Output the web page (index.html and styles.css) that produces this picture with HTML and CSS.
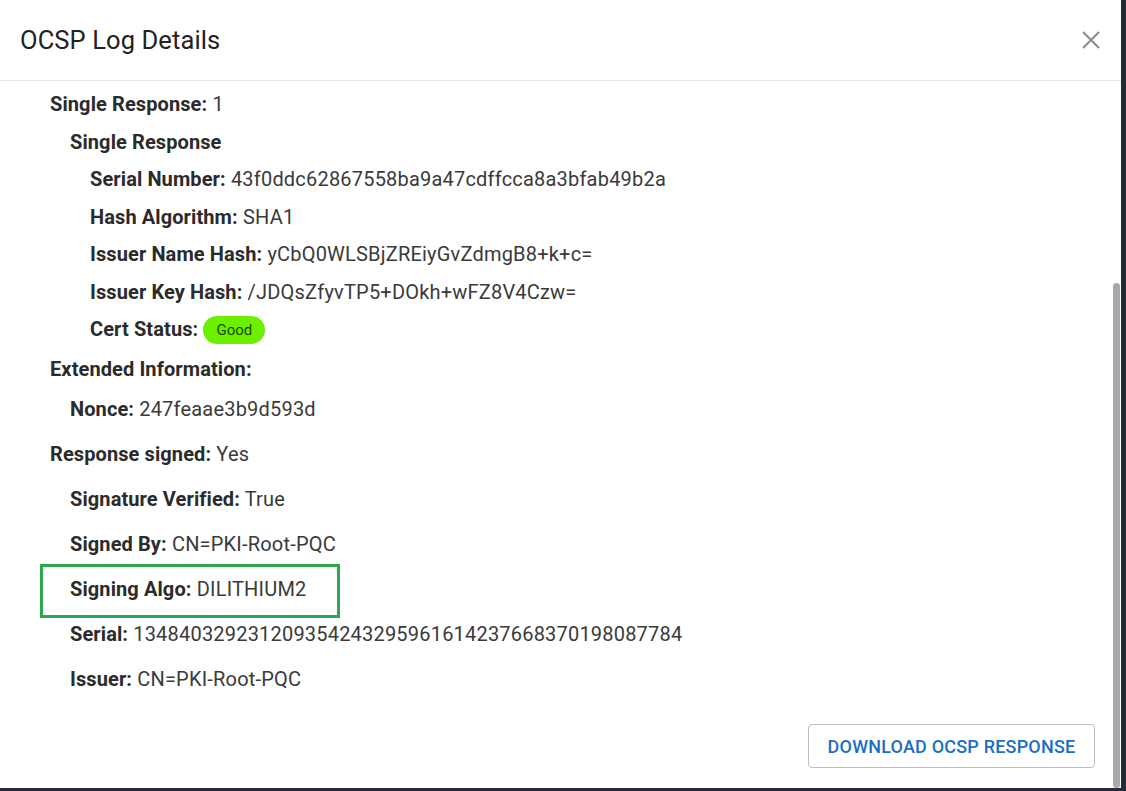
FILE: index.html
```html
<!DOCTYPE html>
<html lang="en">
<head>
    <meta charset="UTF-8">
    <meta name="viewport" content="width=device-width, initial-scale=1.0">
    <title>OCSP Log Details</title>
    <link rel="stylesheet" href="styles.css">
</head>
<body>
    <div class="dialog">
        <div class="dialog-header">
            <h2>OCSP Log Details</h2>
            <button class="close-btn" aria-label="Close">
                <svg width="20" height="20" viewBox="0 0 20 20">
                    <path d="M2 2 L18 18 M18 2 L2 18" stroke="#8a8a8a" stroke-width="2" fill="none"/>
                </svg>
            </button>
        </div>

        <div class="dialog-body">
            <div class="field lvl0"><b>Single Response:</b> 1</div>
            <div class="field lvl1"><b>Single Response</b></div>
            <div class="field lvl2"><b>Serial Number:</b> 43f0ddc62867558ba9a47cdffcca8a3bfab49b2a</div>
            <div class="field lvl2"><b>Hash Algorithm:</b> SHA1</div>
            <div class="field lvl2"><b>Issuer Name Hash:</b> yCbQ0WLSBjZREiyGvZdmgB8+k+c=</div>
            <div class="field lvl2"><b>Issuer Key Hash:</b> /JDQsZfyvTP5+DOkh+wFZ8V4Czw=</div>
            <div class="field lvl2"><b>Cert Status:</b> <span class="badge">Good</span></div>

            <div class="field lvl0 gap-sm"><b>Extended Information:</b></div>
            <div class="field lvl1 gap-sm"><b>Nonce:</b> 247feaae3b9d593d</div>

            <div class="field lvl0 wide gap-md"><b>Response signed:</b> Yes</div>
            <div class="field lvl1 wide"><b>Signature Verified:</b> True</div>
            <div class="field lvl1 wide"><b>Signed By:</b> CN=PKI-Root-PQC</div>
            <div class="field lvl1 wide highlight"><b>Signing Algo:</b> DILITHIUM2</div>
            <div class="field lvl1 wide"><b>Serial:</b> 134840329231209354243295961614237668370198087784</div>
            <div class="field lvl1 wide"><b>Issuer:</b> CN=PKI-Root-PQC</div>
        </div>

        <div class="dialog-footer">
            <button class="btn-outline">Download OCSP Response</button>
        </div>

        <div class="scroll-thumb"></div>
    </div>
</body>
</html>
```

FILE: styles.css
```css
html, body {
    margin: 0;
    padding: 0;
}

body {
    font-family: Roboto, "Liberation Sans", Arial, sans-serif;
    background-color: #262b3a;
    width: 1126px;
    height: 791px;
    overflow: hidden;
}

.dialog {
    position: relative;
    background-color: white;
    width: 1121px;
    height: 788px;
    display: flex;
    flex-direction: column;
}

.dialog-header {
    height: 80px;
    border-bottom: 1px solid #e3e3e3;
    display: flex;
    align-items: center;
    justify-content: space-between;
    padding: 0 20px;
}

.dialog-header h2 {
    margin: 0;
    font-size: 25.5px;
    font-weight: 400;
    letter-spacing: 0.1px;
    color: #222;
}

.close-btn {
    background: none;
    border: 0;
    padding: 0;
    width: 20px;
    height: 20px;
    cursor: pointer;
}

.dialog-body {
    flex: 1;
    padding-top: 5px;
}

.field {
    font-size: 20px;
    line-height: 37.5px;
    letter-spacing: 0.2px;
    color: #3a3a3a;
}

.field b {
    font-weight: 700;
    letter-spacing: 0.1px;
    color: #2b2b2b;
}

.lvl0 { padding-left: 50px; }
.lvl1 { padding-left: 70px; }
.lvl2 { padding-left: 90px; }

.gap-sm { margin-top: 2.5px; }
.gap-md { margin-top: 3px; }

.wide {
    line-height: 45px;
}

.badge {
    display: inline-block;
    background-color: #6cf000;
    color: #1d4a00;
    font-size: 15px;
    letter-spacing: 0;
    line-height: 28px;
    padding: 0 13px;
    border-radius: 14px;
    vertical-align: 1px;
}

.highlight {
    position: relative;
}

.highlight::before {
    content: "";
    position: absolute;
    left: 40px;
    top: -3px;
    width: 294px;
    height: 48px;
    border: 3px solid #2ea84f;
}

.dialog-footer {
    display: flex;
    justify-content: flex-end;
    padding: 0 26px 20px 0;
}

.btn-outline {
    font-family: Roboto, "Liberation Sans", Arial, sans-serif;
    text-transform: uppercase;
    font-size: 18px;
    font-weight: 500;
    letter-spacing: 0.2px;
    color: #1c6fc0;
    background: white;
    border: 1px solid #b5c0c9;
    border-radius: 4px;
    width: 287px;
    height: 44px;
    cursor: pointer;
}

.scroll-thumb {
    position: absolute;
    right: 1px;
    top: 283px;
    bottom: 0;
    width: 7px;
    background-color: #a8a8a8;
    border-radius: 4px;
}
```
